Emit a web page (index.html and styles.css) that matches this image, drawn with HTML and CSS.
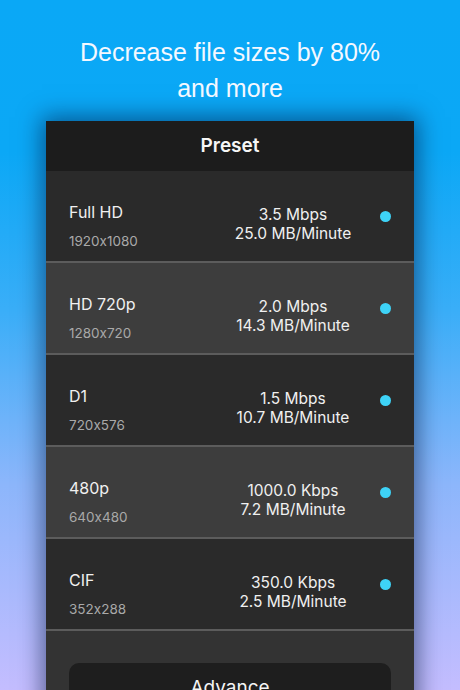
FILE: index.html
```html
<!DOCTYPE html>
<html>
  <head>
    <meta name="viewport" content="width=device-width, initial-scale=1" />
    <link rel="stylesheet" href="styles.css">
  </head>
  <body>
    <h1 class="headline">Decrease file sizes by 80%<br />and more</h1>

    <div class="card">
      <div class="cardHeader">Preset</div>

      <div class="preset dark">
        <div class="presetName">
          <div class="title">Full HD</div>
          <div class="size">1920x1080</div>
        </div>
        <div class="rate">3.5 Mbps<br />25.0 MB/Minute</div>
        <span class="dot"></span>
      </div>

      <div class="preset light">
        <div class="presetName">
          <div class="title">HD 720p</div>
          <div class="size">1280x720</div>
        </div>
        <div class="rate">2.0 Mbps<br />14.3 MB/Minute</div>
        <span class="dot"></span>
      </div>

      <div class="preset dark">
        <div class="presetName">
          <div class="title">D1</div>
          <div class="size">720x576</div>
        </div>
        <div class="rate">1.5 Mbps<br />10.7 MB/Minute</div>
        <span class="dot"></span>
      </div>

      <div class="preset light">
        <div class="presetName">
          <div class="title">480p</div>
          <div class="size">640x480</div>
        </div>
        <div class="rate">1000.0 Kbps<br />7.2 MB/Minute</div>
        <span class="dot"></span>
      </div>

      <div class="preset dark">
        <div class="presetName">
          <div class="title">CIF</div>
          <div class="size">352x288</div>
        </div>
        <div class="rate">350.0 Kbps<br />2.5 MB/Minute</div>
        <span class="dot"></span>
      </div>

      <div class="cardFooter">
        <div class="advanceButton">Advance</div>
      </div>
    </div>
  </body>
</html>
```

FILE: styles.css
```css
html,
body {
  height: 100%;
}
body {
  margin: 0;
  overflow: hidden;
  background: linear-gradient(
    to bottom,
    #0aa8f6 0%,
    #0ba8f6 22%,
    #3aaef8 45%,
    #8cb6fb 70%,
    #c4bdff 100%
  );
  font-family: "Liberation Sans", Arial, sans-serif;
}

.headline {
  margin: 0;
  padding-top: 34px;
  font-size: 25px;
  line-height: 36px;
  font-weight: normal;
  color: #f4f8ff;
  text-align: center;
}

.card {
  width: 368px;
  margin: 15px auto 0;
  background-color: #333333;
  box-shadow: 0 0 22px 4px rgba(0, 20, 60, 0.55);
  font-family: Inter, "Liberation Sans", sans-serif;
  font-feature-settings: "calt" 0;
  color: #f0f0f0;
}

.cardHeader {
  height: 50px;
  line-height: 50px;
  background-color: #1c1c1c;
  text-align: center;
  font-size: 19px;
  font-weight: 600;
  color: #f6f6f6;
}

.preset {
  display: flex;
  align-items: flex-start;
  height: 90px;
  padding: 0 23px;
  border-bottom: 2px solid #5c5c5c;
}
.preset.dark {
  background-color: #2a2a2a;
}
.preset.light {
  background-color: #3d3d3d;
}

.presetName {
  flex: 1;
  padding-top: 31px;
}
.title {
  font-size: 16px;
  line-height: 20px;
}
.size {
  margin-top: 10px;
  font-size: 13.5px;
  line-height: 18px;
  color: #a9a9a9;
}

.rate {
  width: 150px;
  padding-top: 34px;
  font-size: 15.5px;
  line-height: 19px;
  text-align: center;
}

.dot {
  width: 11px;
  height: 11px;
  margin: 40px 0 0 12px;
  border-radius: 50%;
  background-color: #3ed3f7;
}

.cardFooter {
  height: 80px;
  padding: 32px 23px 0;
}
.advanceButton {
  height: 52px;
  line-height: 50px;
  border-radius: 10px;
  background-color: #1e1e1e;
  text-align: center;
  font-size: 19px;
  color: #f4f4f4;
}
```
